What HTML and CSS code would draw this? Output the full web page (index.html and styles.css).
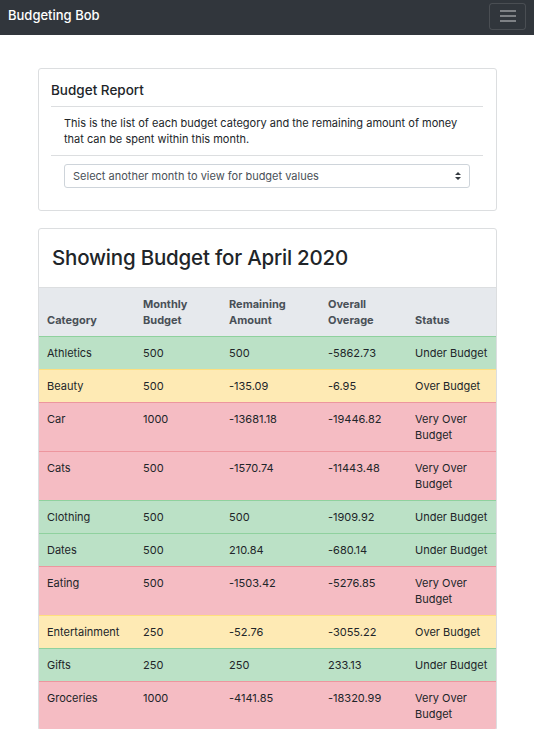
FILE: index.html
```html
<!DOCTYPE html>
<html lang="en">
<head>
<meta charset="utf-8">
<title>Budgeting Bob</title>
<link rel="stylesheet" href="styles.css">
</head>
<body>
<nav class="navbar">
  <span class="brand">Budgeting Bob</span>
  <button class="toggler" aria-label="Toggle navigation">
    <svg width="18" height="14" viewBox="0 0 18 14"><path d="M1 2h16M1 7h16M1 12h16" stroke="rgba(255,255,255,.5)" stroke-width="1.6" fill="none"/></svg>
  </button>
</nav>
<main class="main">
  <section class="card report">
    <h5 class="card-title">Budget Report</h5>
    <hr class="rule">
    <p class="intro">This is the list of each budget category and the remaining amount of money that can be spent within this month.</p>
    <hr class="rule">
    <div class="select-wrap">
      <select class="month-select">
        <option>Select another month to view for budget values</option>
      </select>
      <svg class="select-arrows" width="8" height="10" viewBox="0 0 8 10"><path d="M4 1L7 4H1z M4 9L7 6H1z" fill="#343a40"/></svg>
    </div>
  </section>
  <section class="card budget">
    <div class="card-header"><h2 class="heading">Showing Budget for April 2020</h2></div>
    <table class="table">
      <colgroup>
        <col class="c1"><col class="c2"><col class="c3"><col class="c4"><col class="c5">
      </colgroup>
      <thead>
        <tr><th>Category</th><th>Monthly Budget</th><th>Remaining Amount</th><th>Overall Overage</th><th>Status</th></tr>
      </thead>
      <tbody>
        <tr class="ok"><td>Athletics</td><td>500</td><td>500</td><td>-5862.73</td><td>Under Budget</td></tr>
        <tr class="warn"><td>Beauty</td><td>500</td><td>-135.09</td><td>-6.95</td><td>Over Budget</td></tr>
        <tr class="bad"><td>Car</td><td>1000</td><td>-13681.18</td><td>-19446.82</td><td>Very Over Budget</td></tr>
        <tr class="bad"><td>Cats</td><td>500</td><td>-1570.74</td><td>-11443.48</td><td>Very Over Budget</td></tr>
        <tr class="ok"><td>Clothing</td><td>500</td><td>500</td><td>-1909.92</td><td>Under Budget</td></tr>
        <tr class="ok"><td>Dates</td><td>500</td><td>210.84</td><td>-680.14</td><td>Under Budget</td></tr>
        <tr class="bad"><td>Eating</td><td>500</td><td>-1503.42</td><td>-5276.85</td><td>Very Over Budget</td></tr>
        <tr class="warn"><td>Entertainment</td><td>250</td><td>-52.76</td><td>-3055.22</td><td>Over Budget</td></tr>
        <tr class="ok"><td>Gifts</td><td>250</td><td>250</td><td>233.13</td><td>Under Budget</td></tr>
        <tr class="bad"><td>Groceries</td><td>1000</td><td>-4141.85</td><td>-18320.99</td><td>Very Over Budget</td></tr>
      </tbody>
    </table>
  </section>
</main>
</body>
</html>
```
FILE: styles.css
```css
* { box-sizing: border-box; }
html, body { margin: 0; padding: 0; }
body {
  font-family: "Inter", "Roboto", "Liberation Sans", sans-serif;
  font-size: 11px;
  line-height: 16px;
  color: #212529;
  background: #fff;
}
.navbar {
  height: 35px;
  background: #31363c;
  display: flex;
  align-items: center;
  justify-content: space-between;
  padding: 0 8px 0 8px;
}
.brand {
  color: #fff;
  font-size: 13px;
  font-weight: 500;
  line-height: 20px;
  margin-top: -5px;
}
.toggler {
  width: 37px;
  height: 27px;
  margin-top: -3px;
  background: transparent;
  border: 1px solid rgba(255,255,255,.12);
  border-radius: 3px;
  display: flex;
  align-items: center;
  justify-content: center;
  padding: 0;
}
.main {
  padding: 33px 37px 0 38px;
}
.card {
  border: 1px solid #dcdee0;
  border-radius: 3px;
  background: #fff;
}
.report {
  padding: 11px 13px 22px 12px;
}
.card-title {
  margin: 0;
  font-size: 13.5px;
  font-weight: 500;
  line-height: 20px;
  padding-top: 0;
  padding-bottom: 6px;
}
.rule {
  margin: 0;
  border: 0;
  border-top: 1px solid #dcdee0;
}
.intro {
  margin: 0;
  padding: 8px 13px 8px 13px;
}
.select-wrap {
  position: relative;
  margin: 8px 13px 0 13px;
}
.month-select {
  appearance: none;
  -webkit-appearance: none;
  width: 100%;
  height: 24px;
  border: 1px solid #ced4da;
  border-radius: 3px;
  background: #fff;
  font-family: inherit;
  font-size: 11px;
  color: #495057;
  padding: 0 8px;
}
.select-arrows {
  position: absolute;
  right: 8px;
  top: 7px;
}
.budget {
  margin-top: 17px;
  overflow: hidden;
}
.card-header {
  padding: 14px 13px 14px 13px;
  border-bottom: 1px solid #dcdee0;
}
.heading {
  margin: 0;
  font-size: 20.5px;
  font-weight: 500;
  letter-spacing: -0.2px;
  line-height: 30px;
}
.table {
  width: 100%;
  border-collapse: collapse;
  table-layout: fixed;
}
.c1 { width: 96px; }
.c2 { width: 86px; }
.c3 { width: 99px; }
.c4 { width: 87px; }
.c5 { width: 89px; }
.table th, .table td {
  padding: 8px 8px 8px 8px;
  text-align: left;
  vertical-align: top;
}
.table th {
  vertical-align: bottom;
  background: #e6e9ed;
  color: #495057;
  font-weight: 700;
  padding-top: 8px;
  padding-bottom: 8px;
}
.table tbody td { border-top: 1px solid transparent; }
.ok td { background: #bbe1c6; border-top-color: #8fd19e !important; }
.warn td { background: #feeab4; border-top-color: #ffdf7e !important; }
.bad td { background: #f5bcc3; border-top-color: #ed969e !important; }
```
